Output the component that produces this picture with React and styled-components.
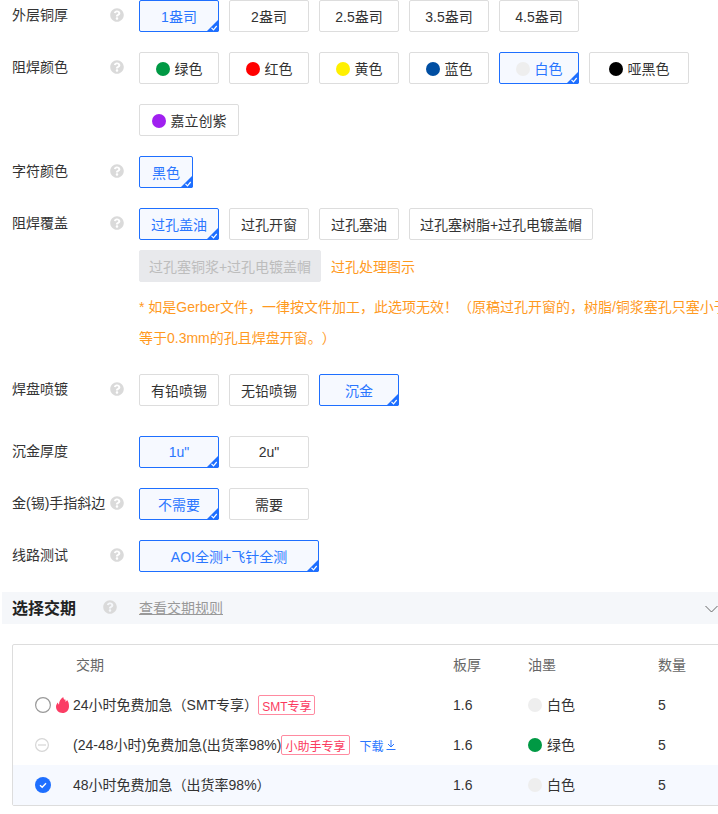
import React from "react";
import styled, { createGlobalStyle } from "styled-components";
import { FaQuestionCircle } from "react-icons/fa";

const Global = createGlobalStyle`
  html, body { margin: 0; padding: 0; background: #fff; overflow: hidden; }
  body { font-family: "Liberation Sans", "Noto Sans CJK SC", sans-serif; font-size: 14px; color: #333; text-spacing-trim: space-all; }
  * { box-sizing: border-box; }
`;

const Page = styled.div`
  width: 718px;
  height: 814px;
  overflow: hidden;
`;
const FormRow = styled.div`
  display: flex;
  margin-bottom: ${(p) => p.$mb ?? 20}px;
`;
const LabelCell = styled.div`
  width: 139px;
  flex: none;
  display: flex;
  align-items: flex-start;
  padding-left: 12px;
  height: 32px;
  line-height: 30px;
`;
const LabelText = styled.span`
  width: 98px;
  white-space: nowrap;
`;
const HelpIcon = styled(FaQuestionCircle)`
  color: #dadada;
  width: 14px;
  height: 14px;
  margin-top: ${(p) => p.$mt ?? 8}px;
  flex: none;
`;
const Body = styled.div`
  flex: 1;
  min-width: 0;
`;
const Options = styled.div`
  display: flex;
  flex-wrap: wrap;
  align-items: center;
  gap: ${(p) => p.$gap ?? 20}px 10px;
`;
const Option = styled.div`
  position: relative;
  width: ${(p) => p.$w ?? 80}px;
  height: 32px;
  display: flex;
  align-items: center;
  justify-content: center;
  gap: 5px;
  border-radius: 2px;
  white-space: nowrap;
  border: 1px solid ${(p) => (p.$on ? "#1e6fff" : p.$off ? "#e8e9ec" : "#dddddd")};
  background: ${(p) => (p.$on ? "#f6f9ff" : p.$off ? "#e8e9ec" : "#fff")};
  color: ${(p) => (p.$on ? "#2a76ff" : p.$off ? "#bdbdbd" : "#333")};
`;
const Swatch = styled.i`
  display: block;
  width: 14px;
  height: 14px;
  border-radius: 50%;
  flex: none;
  background: ${(p) => p.$c};
`;
const OptionSwatch = styled(Swatch)`
  margin-top: 2px;
`;
const CornerSvg = styled.svg`
  position: absolute;
  right: -1px;
  bottom: -1px;
  display: block;
`;
const Corner = () => (
  <CornerSvg width="13" height="13" viewBox="0 0 13 13">
    <path d="M13 0V11a2 2 0 0 1-2 2H0Z" fill="#1e6fff" />
    <path d="M5.500 8.800l2 2 3.200-3.800" fill="none" stroke="#fff" strokeWidth="1.2" />
  </CornerSvg>
);
const OrangeLink = styled.span`
  color: #ff9a1f;
`;
const Notice = styled.div`
  margin-top: 10px;
  width: 640px;
  color: #ff9a1f;
  line-height: 31px;
`;
const NoticeLine = styled.div`
  white-space: nowrap;
`;
const SectionBar = styled.div`
  margin: 0 0 20px 2px;
  height: 32px;
  background: #f5f7fa;
  display: flex;
  align-items: center;
  padding: 0 0 2px 10px;
`;
const SectionTitle = styled.b`
  width: 91px;
  font-size: 16px;
  color: #222;
`;
const SectionLink = styled.span`
  margin-left: 22px;
  color: #999;
  text-decoration: underline;
`;
const Chevron = styled.svg`
  margin: 3px 0 0 auto;
  display: block;
  flex: none;
`;
const Table = styled.div`
  margin-left: 12px;
  width: 760px;
  height: 162px;
  border: 1px solid #ddd;
  border-radius: 2px;
`;
const TableRow = styled.div`
  display: grid;
  grid-template-columns: 440px 75px 130px 1fr;
  height: 40px;
  padding-bottom: ${(p) => p.$pb ?? 0}px;
  align-items: center;
  background: ${(p) => (p.$on ? "#f6f9ff" : "transparent")};
`;
const HeadRow = styled(TableRow)`
  color: #666;
`;
const HeadFirst = styled.div`
  padding-left: 63px;
`;
const Cell = styled.div`
  display: flex;
  align-items: center;
  white-space: nowrap;
`;
const CjkText = styled.span`
  padding-bottom: 2px;
`;
const NameCell = styled(Cell)`
  padding-left: 22px;
`;
const RadioBox = styled.svg`
  display: block;
  flex: none;
  margin-right: ${(p) => p.$mr ?? 22}px;
`;
const FlameSvg = styled.svg`
  display: block;
  flex: none;
  margin: 0 4px 0 5px;
`;
const Tag = styled.span`
  height: 20px;
  padding: 0 3px;
  display: inline-flex;
  align-items: center;
  font-size: 12px;
  color: #fb3a5e;
  border: 1px solid #ff8aa0;
  border-radius: 2px;
`;
const DownloadLink = styled.span`
  margin-left: 10px;
  font-size: 12px;
  color: #2a76ff;
  display: inline-flex;
  align-items: center;
  gap: 2px;
`;
const InkCell = styled(Cell)`
  gap: 5px;
`;

const Label = ({ children }) => (
  <LabelCell>
    <LabelText>{children}</LabelText>
    <HelpIcon />
  </LabelCell>
);

const Opt = ({ on, off, w, c, children }) => (
  <Option $on={on} $off={off} $w={w}>
    {c && <OptionSwatch $c={c} />}
    <span>{children}</span>
    {on && <Corner />}
  </Option>
);

const Radio = ({ kind }) => {
  if (kind === "on")
    return (
      <RadioBox width="16" height="16" viewBox="0 0 16 16">
        <circle cx="8" cy="8" r="8" fill="#1e6fff" />
        <path d="M5 8.200l2.200 2.100L11 6.200" fill="none" stroke="#fff" strokeWidth="1.4" />
      </RadioBox>
    );
  if (kind === "off")
    return (
      <RadioBox width="16" height="16" viewBox="0 0 16 16">
        <circle cx="7" cy="8" r="6.400" fill="#fff" stroke="#d6d6d6" strokeWidth="1.2" />
        <path d="M3 8h8" stroke="#d6d6d6" strokeWidth="1.2" />
      </RadioBox>
    );
  return (
    <RadioBox $mr={0} width="16" height="16" viewBox="0 0 16 16">
      <circle cx="8" cy="8" r="7.400" fill="#fff" stroke="#999" strokeWidth="1.2" />
    </RadioBox>
  );
};

const Flame = () => (
  <FlameSvg width="13" height="16" viewBox="0 0 13 16">
    <path
      d="M7.200 0C7.600 2 8.400 3 9.400 2.600c.3 1 .1 1.600-.2 2.200C10.800 4.400 11 3.400 11 2.800c1.300 1.800 2 3.700 2 6.400C13 13.200 10.200 16 6.500 16S0 13.200 0 9.800C0 8 .8 6.400 2 5.400c0 1 .4 1.700 1 2C3 4.400 4.600 1.600 7.200 0Z"
      fill="#fb3d64"
    />
  </FlameSvg>
);

const Ink = ({ c, children }) => (
  <InkCell>
    <Swatch $c={c} />
    <CjkText>{children}</CjkText>
  </InkCell>
);

export default function App() {
  return (
    <Page>
      <Global />
      <FormRow>
        <Label>外层铜厚</Label>
        <Body>
          <Options>
            <Opt on>1盎司</Opt>
            <Opt>2盎司</Opt>
            <Opt>2.5盎司</Opt>
            <Opt>3.5盎司</Opt>
            <Opt>4.5盎司</Opt>
          </Options>
        </Body>
      </FormRow>
      <FormRow>
        <Label>阻焊颜色</Label>
        <Body>
          <Options>
            <Opt c="#009944">绿色</Opt>
            <Opt c="#ff0000">红色</Opt>
            <Opt c="#fff000">黄色</Opt>
            <Opt c="#004ea2">蓝色</Opt>
            <Opt on c="#eeeeee">白色</Opt>
            <Opt w={100} c="#000000">哑黑色</Opt>
            <Opt w={100} c="#a020f0">嘉立创紫</Opt>
          </Options>
        </Body>
      </FormRow>
      <FormRow>
        <Label>字符颜色</Label>
        <Body>
          <Options>
            <Opt on w={54}>黑色</Opt>
          </Options>
        </Body>
      </FormRow>
      <FormRow>
        <Label>阻焊覆盖</Label>
        <Body>
          <Options $gap={10}>
            <Opt on>过孔盖油</Opt>
            <Opt>过孔开窗</Opt>
            <Opt>过孔塞油</Opt>
            <Opt w={184}>过孔塞树脂+过孔电镀盖帽</Opt>
            <Opt off w={182}>过孔塞铜浆+过孔电镀盖帽</Opt>
            <OrangeLink>过孔处理图示</OrangeLink>
          </Options>
          <Notice>
            <NoticeLine>* 如是Gerber文件，一律按文件加工，此选项无效！（原稿过孔开窗的，树脂/铜浆塞孔只塞小于</NoticeLine>
            <NoticeLine>等于0.3mm的孔且焊盘开窗。）</NoticeLine>
          </Notice>
        </Body>
      </FormRow>
      <FormRow $mb={30}>
        <Label>焊盘喷镀</Label>
        <Body>
          <Options>
            <Opt>有铅喷锡</Opt>
            <Opt>无铅喷锡</Opt>
            <Opt on>沉金</Opt>
          </Options>
        </Body>
      </FormRow>
      <FormRow>
        <LabelCell>
          <LabelText>沉金厚度</LabelText>
        </LabelCell>
        <Body>
          <Options>
            <Opt on>1u"</Opt>
            <Opt>2u"</Opt>
          </Options>
        </Body>
      </FormRow>
      <FormRow>
        <Label>金(锡)手指斜边</Label>
        <Body>
          <Options>
            <Opt on>不需要</Opt>
            <Opt>需要</Opt>
          </Options>
        </Body>
      </FormRow>
      <FormRow>
        <Label>线路测试</Label>
        <Body>
          <Options>
            <Opt on w={180}>AOI全测+飞针全测</Opt>
          </Options>
        </Body>
      </FormRow>
      <SectionBar>
        <SectionTitle>选择交期</SectionTitle>
        <HelpIcon $mt={0} />
        <SectionLink>查看交期规则</SectionLink>
        <Chevron width="13" height="8" viewBox="0 0 13 8">
          <path d="M.5 1l6 6 6-6" fill="none" stroke="#666" strokeWidth="1" />
        </Chevron>
      </SectionBar>
      <Table>
        <HeadRow $pb={2}>
          <HeadFirst>交期</HeadFirst>
          <Cell>板厚</Cell>
          <Cell>油墨</Cell>
          <Cell>数量</Cell>
        </HeadRow>
        <TableRow>
          <NameCell>
            <Radio />
            <Flame />
            <CjkText>24小时免费加急（SMT专享）</CjkText>
            <Tag>SMT专享</Tag>
          </NameCell>
          <Cell>1.6</Cell>
          <Ink c="#eeeeee">白色</Ink>
          <Cell>5</Cell>
        </TableRow>
        <TableRow>
          <NameCell>
            <Radio kind="off" />
            <CjkText>(24-48小时)免费加急(出货率98%)</CjkText>
            <Tag>小助手专享</Tag>
            <DownloadLink>
              下载
              <svg width="10" height="10" viewBox="0 0 10 10">
                <path d="M5 0v6.500M2 4l3 3 3-3M.5 9.500h9" fill="none" stroke="#2a76ff" strokeWidth="1" />
              </svg>
            </DownloadLink>
          </NameCell>
          <Cell>1.6</Cell>
          <Ink c="#009944">绿色</Ink>
          <Cell>5</Cell>
        </TableRow>
        <TableRow $on>
          <NameCell>
            <Radio kind="on" />
            <CjkText>48小时免费加急（出货率98%）</CjkText>
          </NameCell>
          <Cell>1.6</Cell>
          <Ink c="#eeeeee">白色</Ink>
          <Cell>5</Cell>
        </TableRow>
      </Table>
    </Page>
  );
}
